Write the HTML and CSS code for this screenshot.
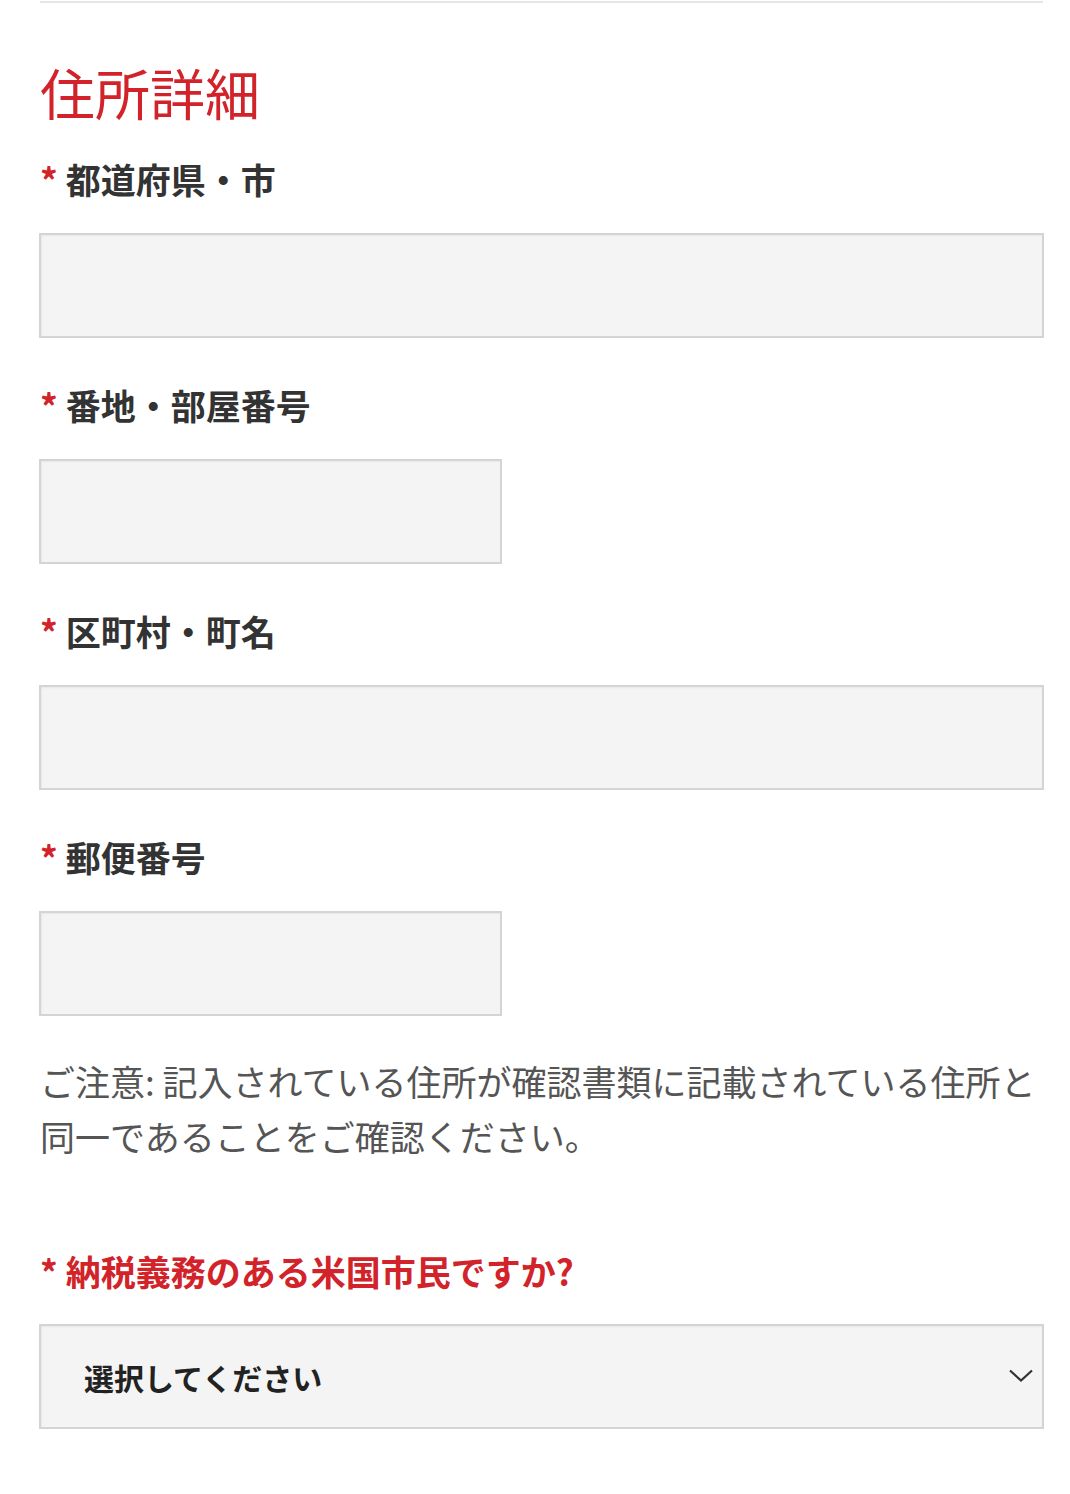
FILE: index.html
```html
<!DOCTYPE html>
<html lang="ja">
<head>
    <meta charset="UTF-8">
    <meta name="viewport" content="width=device-width, initial-scale=1.0">
    <title>住所詳細</title>
    <link rel="stylesheet" href="styles.css">
</head>
<body>
    <div class="page">
        <hr class="divider">

        <h2 class="section-title">住所詳細</h2>

        <form class="address-form">
            <div class="field">
                <label for="city"><span class="req">*</span> 都道府県・市</label>
                <input type="text" id="city" class="text-input full">
            </div>

            <div class="field">
                <label for="street"><span class="req">*</span> 番地・部屋番号</label>
                <input type="text" id="street" class="text-input half">
            </div>

            <div class="field">
                <label for="town"><span class="req">*</span> 区町村・町名</label>
                <input type="text" id="town" class="text-input full">
            </div>

            <div class="field">
                <label for="zip"><span class="req">*</span> 郵便番号</label>
                <input type="text" id="zip" class="text-input half">
            </div>

            <p class="note">ご注意: 記入されている住所が確認書類に記載されている住所と同一であることをご確認ください。</p>

            <div class="field field-red">
                <label for="taxpayer"><span class="req">*</span> 納税義務のある米国市民ですか?</label>
                <div class="select-box">
                    <select id="taxpayer">
                        <option>選択してください</option>
                        <option>はい</option>
                        <option>いいえ</option>
                    </select>
                    <svg class="chevron" width="26" height="15" viewBox="0 0 26 15">
                        <path d="M2 2.5 L13 12.5 L24 2.5" fill="none" stroke="#333" stroke-width="2.2"/>
                    </svg>
                </div>
            </div>
        </form>
    </div>
</body>
</html>
```

FILE: styles.css
```css
/* 全体 */
body {
    margin: 0;
    padding: 0;
    background-color: #ffffff;
    font-family: "Noto Sans CJK JP", "Noto Sans", sans-serif;
    color: #333;
}

.page {
    padding: 0 20px 0 39px;
}

.divider {
    border: none;
    border-top: 2px solid #e6e6e6;
    margin: 1px 0 0 1px;
    width: 1003px;
}

/* 見出し */
.section-title {
    color: #d2232a;
    font-size: 55px;
    font-weight: 400;
    line-height: 70px;
    margin: 53px 0 0 1px;
}

/* 入力欄 */
.field {
    display: flex;
    flex-direction: column;
    align-items: flex-start;
}

.field label {
    font-size: 35px;
    font-weight: 700;
    line-height: 50px;
    margin: 28px 0 0 1px;
    color: #333;
}

.field + .field label {
    margin-top: 42px;
}

.req {
    color: #d2232a;
}

.text-input {
    box-sizing: border-box;
    height: 105px;
    margin-top: 29px;
    background-color: #f4f4f4;
    border: 2px solid #d4d4d4;
    box-shadow: inset 1px 1px 2px rgba(0, 0, 0, 0.05);
    font-size: 30px;
    padding: 0 20px;
}
.text-input.full {
    width: 1005px;
}
.text-input.half {
    width: 463px;
}

/* ご注意 */
.note {
    font-size: 35px;
    line-height: 55px;
    color: #555;
    margin: 37px 0 0 1px;
}

/* セレクト */
.field-red label {
    color: #d2232a;
    margin-top: 83px;
}

.select-box {
    position: relative;
    width: 1005px;
    margin-top: 28px;
}

.select-box select {
    box-sizing: border-box;
    width: 100%;
    height: 105px;
    appearance: none;
    -webkit-appearance: none;
    background-color: #f4f4f4;
    border: 2px solid #d4d4d4;
    border-radius: 0;
    box-shadow: inset 1px 1px 2px rgba(0, 0, 0, 0.05);
    font-family: "Noto Sans CJK JP", "Noto Sans", sans-serif;
    font-size: 30px;
    font-weight: 700;
    color: #222;
    padding: 0 40px 0 43px;
}

.chevron {
    position: absolute;
    right: 10px;
    top: 44px;
    pointer-events: none;
}
```
